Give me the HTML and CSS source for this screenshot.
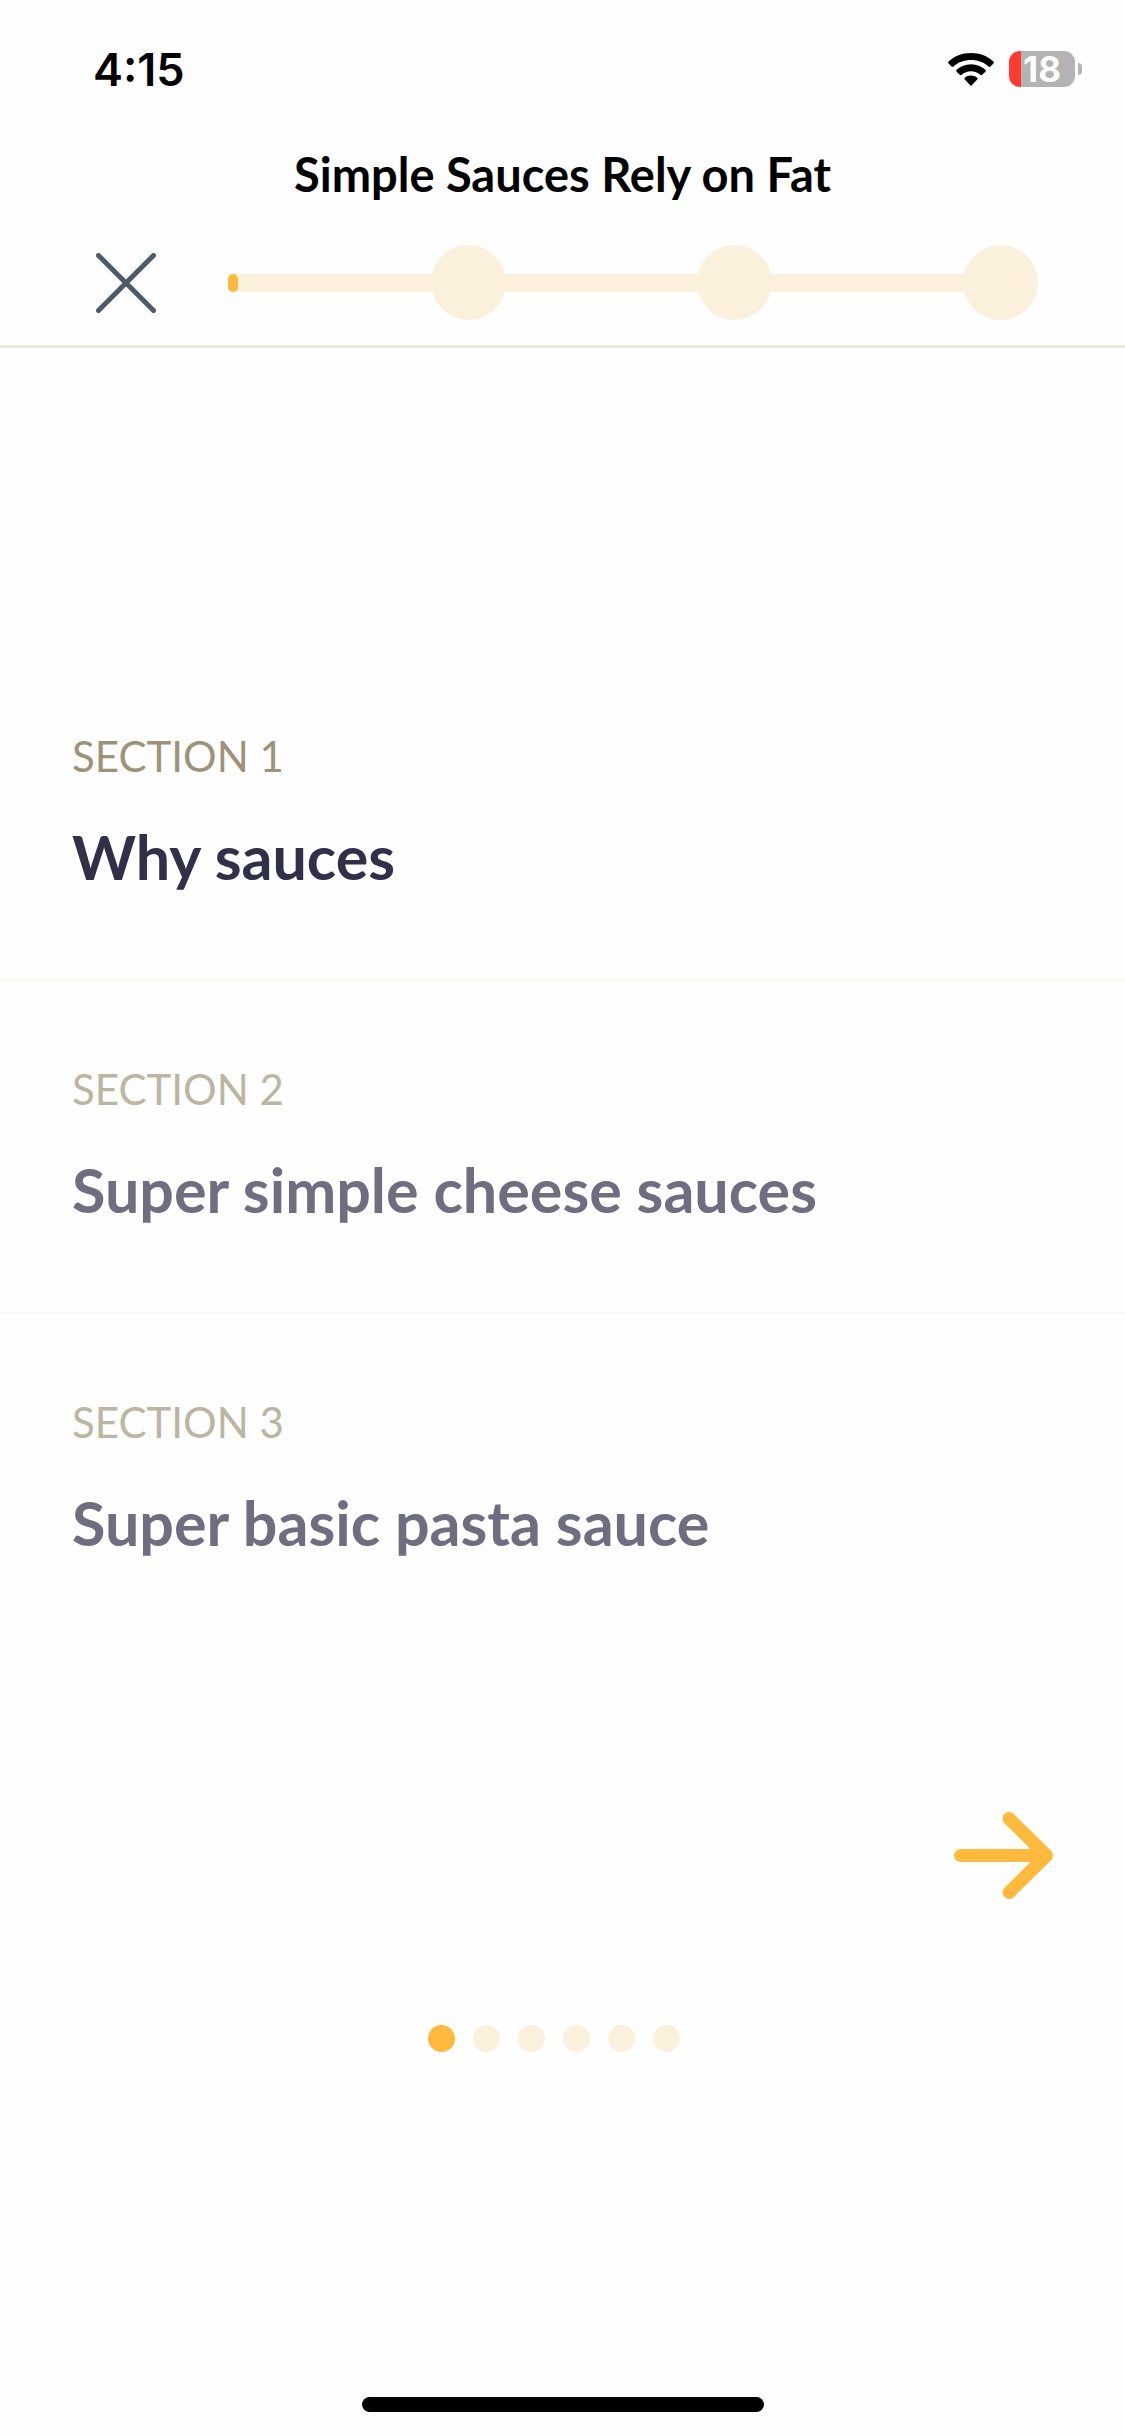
FILE: index.html
```
<!DOCTYPE html>
<html lang="en">
<head>
    <meta charset="UTF-8">
    <meta name="viewport" content="width=device-width, initial-scale=1.0">
    <title>Simple Sauces Rely on Fat</title>
    <link rel="stylesheet" href="styles.css">
</head>
<body>
    <div class="status-bar">
        <span class="time">4:15</span>
        <div class="status-icons">
            <svg class="wifi" viewBox="0 0 46 33" aria-hidden="true">
                <path d="M23 0C14 0 6 3.400 0.600 8.600Q-0.300 9.600 0.600 10.600L3.500 13.500Q4.500 14.300 5.500 13.500C10 9.300 16 7 23 7S36 9.300 40.500 13.500Q41.500 14.300 42.500 13.500L45.400 10.600Q46.300 9.600 45.400 8.600C40 3.400 32 0 23 0Z"/>
                <path d="M23 11.300C17.400 11.300 12.400 13.400 8.600 16.800Q7.700 17.800 8.600 18.700L11.800 21.800Q12.700 22.600 13.700 21.800C16.200 19.600 19.400 18.300 23 18.300S29.800 19.600 32.300 21.800Q33.300 22.600 34.200 21.800L37.400 18.700Q38.300 17.800 37.400 16.800C33.600 13.400 28.600 11.300 23 11.300Z"/>
                <path d="M23 22.600C20.600 22.600 18.400 23.400 16.800 24.700Q15.800 25.600 16.800 26.600L22.200 32.300Q23 33 23.800 32.300L29.200 26.600Q30.200 25.600 29.200 24.700C27.600 23.400 25.400 22.600 23 22.600Z"/>
            </svg>
            <div class="battery">
                <span class="battery-level">18</span>
                <span class="battery-cap"></span>
            </div>
        </div>
    </div>

    <header class="lesson-header">
        <h1>Simple Sauces Rely on Fat</h1>
        <div class="header-row">
            <button class="close-button" type="button" aria-label="Close">
                <svg viewBox="0 0 60 60" aria-hidden="true">
                    <path d="M2.500 2.500L57.500 57.500M57.500 2.500L2.500 57.500"/>
                </svg>
            </button>
            <div class="progress" role="progressbar" aria-label="Lesson progress" aria-valuemin="0" aria-valuemax="100" aria-valuenow="1">
                <span class="track start"></span>
                <span class="step"></span>
                <span class="track"></span>
                <span class="step"></span>
                <span class="track"></span>
                <span class="step"></span>
            </div>
        </div>
    </header>

    <main>
        <ul class="sections">
            <li class="section active">
                <p>SECTION 1</p>
                <h2>Why sauces</h2>
            </li>
            <li class="section">
                <p>SECTION 2</p>
                <h2>Super simple cheese sauces</h2>
            </li>
            <li class="section">
                <p>SECTION 3</p>
                <h2>Super basic pasta sauce</h2>
            </li>
        </ul>

        <div class="next-row">
            <button class="next-button" type="button" aria-label="Next">
                <svg viewBox="0 0 99 87" aria-hidden="true">
                    <path d="M6.500 43.500H92.500M55 6.500L92.500 43.500L55 80.500"/>
                </svg>
            </button>
        </div>

        <div class="dots">
            <span class="dot current"></span>
            <span class="dot"></span>
            <span class="dot"></span>
            <span class="dot"></span>
            <span class="dot"></span>
            <span class="dot"></span>
        </div>
    </main>

    <div class="home-indicator"></div>
</body>
</html>
```

FILE: styles.css
```
* {
    box-sizing: border-box;
}
body {
    margin: 0;
    min-height: 100vh;
    display: flex;
    flex-direction: column;
    background-color: #fefefe;
    font-family: Lato, "Open Sans", sans-serif;
}
h1, h2, p, ul {
    margin: 0;
    padding: 0;
}
button {
    padding: 0;
    border: 0;
    background: none;
    cursor: pointer;
}
svg {
    display: block;
    width: 100%;
    height: 100%;
}

/* Status bar */
.status-bar {
    height: 138px;
    padding: 0 43px 0 93px;
    display: flex;
    justify-content: space-between;
    align-items: center;
    font-family: Inter, "Liberation Sans", sans-serif;
}
.time {
    font-size: 45px;
    font-weight: 600;
    color: #000;
}
.status-icons {
    display: flex;
    align-items: center;
    gap: 15px;
}
.wifi {
    width: 46px;
    height: 33px;
}
.battery {
    display: flex;
    align-items: center;
    gap: 3px;
}
.battery-level {
    width: 66px;
    height: 36px;
    border-radius: 11px;
    background: linear-gradient(to right, #ff3b30 12px, #b3b3b3 12px);
    color: #fff;
    font-size: 35px;
    font-weight: 700;
    line-height: 36px;
    text-align: center;
}
.battery-cap {
    width: 4px;
    height: 12px;
    border-radius: 0 4px 4px 0;
    background-color: #b3b3b3;
}

/* Header */
.lesson-header {
    padding: 9px 0 25px;
    border-bottom: 3px solid #e9e9df;
}
.lesson-header h1 {
    font-size: 47px;
    line-height: 54px;
    text-align: center;
    color: #000;
}
.header-row {
    margin-top: 44px;
    padding: 0 87px 0 96px;
    display: flex;
    align-items: center;
    gap: 72px;
}
.close-button {
    width: 60px;
    height: 60px;
}
.close-button path {
    fill: none;
    stroke: #4d5a67;
    stroke-width: 5;
    stroke-linecap: round;
}
.progress {
    flex: 1;
    display: flex;
    align-items: center;
}
/* tracks run a little way under the round steps */
.track {
    flex: 1;
    height: 18px;
    margin: 0 -4px;
    background-color: #fbf0db;
}
.track.start {
    flex: 0 0 calc(25% + 4px);
    margin-left: 0;
    border-radius: 5px 0 0 5px;
}
.track.start::before {
    content: "";
    display: block;
    width: 10px;
    height: 18px;
    border-radius: 5px;
    background-color: #ffb93c;
}
.step {
    width: 75px;
    height: 75px;
    border-radius: 50%;
    background-color: #fbf0db;
}

/* Sections */
.sections {
    margin-top: 300px;
    list-style: none;
}
.section {
    padding: 81px 72px 86px;
    border-bottom: 3px solid #f8f8f5;
}
.section:last-child {
    border-bottom-color: transparent;
}
.section p {
    font-size: 42px;
    line-height: 54px;
    color: #bbb5a2;
}
.section h2 {
    margin-top: 39px;
    font-size: 61px;
    line-height: 70px;
    color: #6f6e80;
}
.section.active p {
    color: #9e9378;
}
.section.active h2 {
    color: #313049;
}

.next-row {
    margin-top: 165px;
    padding-right: 72px;
    display: flex;
    justify-content: flex-end;
}
.next-button {
    width: 99px;
    height: 87px;
}
.next-button path {
    fill: none;
    stroke: #ffb93c;
    stroke-width: 13;
    stroke-linecap: round;
    stroke-linejoin: round;
}

.dots {
    margin-top: 126px;
    display: flex;
    justify-content: center;
}
.dot {
    width: 27px;
    height: 27px;
    margin-right: 18px;
    border-radius: 50%;
    background-color: #fbf0db;
}
.dot.current {
    background-color: #ffb93c;
}

.home-indicator {
    width: 402px;
    height: 15px;
    margin: auto auto 24px;
    border-radius: 8px;
    background-color: #000;
}
```
